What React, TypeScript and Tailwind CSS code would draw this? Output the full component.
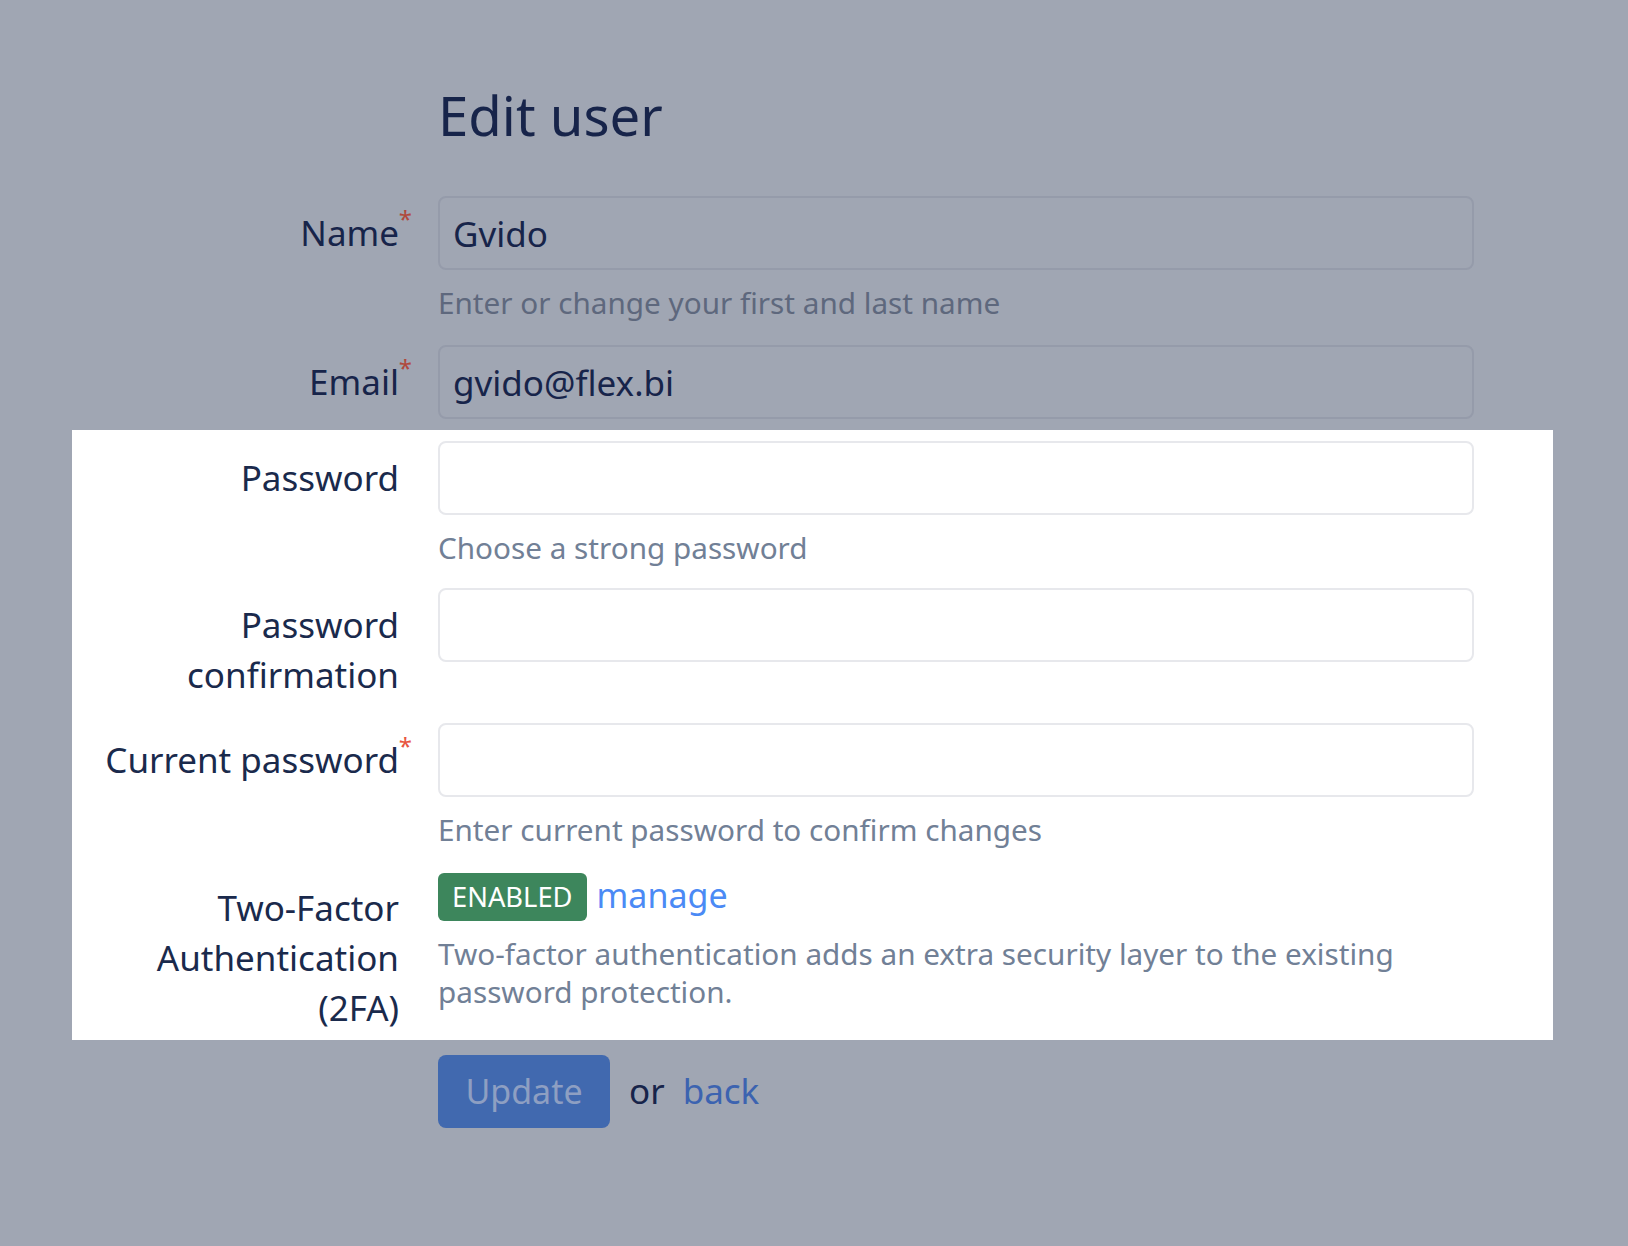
import React from 'react';

// dimmed page colours (overlay over the page) vs. the highlighted white area
const Req = ({ dim }: { dim?: boolean }) => (
    <span className={`absolute -right-[13px] top-[-1px] text-[24px] leading-none ${dim ? 'text-[#b0493d]' : 'text-[#e8553f]'}`}>*</span>
);

function Label({ text, required, dim, lines }: { text: string; required?: boolean; dim?: boolean; lines?: string[] }) {
    return (
        <div className={`w-[327px] shrink-0 text-right pt-[12px] text-[35px] leading-[50px] ${dim ? 'text-[#17244a]' : 'text-[#1a2a4c]'}`}>
            {lines ? (
                lines.map((l, i) => (
                    <div key={i}>{l}</div>
                ))
            ) : (
                <span className="relative inline-block">
                    {text}
                    {required && <Req dim={dim} />}
                </span>
            )}
        </div>
    );
}

function Input({ value, dim, type = 'text' }: { value?: string; dim?: boolean; type?: string }) {
    return (
        <input
            type={type}
            defaultValue={value}
            readOnly
            className={`w-[1036px] h-[74px] rounded-[8px] border-2 px-[13px] text-[35px] outline-none ${dim ? 'bg-[#a0a6b3] border-[#959baa] text-[#17244a]' : 'bg-white border-[#e7e8ec] text-[#1a2a4c]'}`}
            style={{ fontFamily: 'inherit' }}
        />
    );
}

function Help({ children, dim }: { children: React.ReactNode; dim?: boolean }) {
    return <p className={`mt-[14px] text-[29.7px] leading-[38px] ${dim ? 'text-[#5e687d]' : 'text-[#718096]'}`}>{children}</p>;
}

export default function App() {
    return (
        <div className="min-h-screen w-full bg-[#a0a6b3] pt-[80px] pb-[110px]" style={{ fontFamily: '"Noto Sans", "Open Sans", sans-serif' }}>
            <div className="ml-[72px] w-[1481px]">
                <div className="flex gap-[39px]">
                    <div className="w-[327px] shrink-0" />
                    <h1 className="text-[54.5px] leading-[70px] text-[#17244a]">Edit user</h1>
                </div>

                <div className="mt-[46px] flex gap-[39px]">
                    <Label text="Name" required dim />
                    <div>
                        <Input value="Gvido" dim />
                        <Help dim>Enter or change your first and last name</Help>
                    </div>
                </div>

                <div className="mt-[23px] flex gap-[39px]">
                    <Label text="Email" required dim />
                    <Input value="gvido@flex.bi" dim />
                </div>

                {/* highlighted block */}
                <div className="mt-[11px] bg-white pt-[11px] pb-[7px]">
                    <div className="flex gap-[39px]">
                        <Label text="Password" />
                        <div>
                            <Input type="password" />
                            <Help>Choose a strong password</Help>
                        </div>
                    </div>

                    <div className="mt-[21px] flex gap-[39px]">
                        <Label text="" lines={['Password', 'confirmation']} />
                        <div>
                            <Input type="password" />
                        </div>
                    </div>

                    <div className="mt-[23px] flex gap-[39px]">
                        <Label text="Current password" required />
                        <div>
                            <Input type="password" />
                            <Help>Enter current password to confirm changes</Help>
                        </div>
                    </div>

                    <div className="mt-[22px] flex gap-[39px]">
                        <Label text="" lines={['Two-Factor', 'Authentication', '(2FA)']} />
                        <div className="w-[1036px] pt-[2px]">
                            <div className="flex items-center gap-[10px]">
                                <span className="inline-flex h-[48px] items-center rounded-[6px] bg-[#3d865c] px-[14px] text-[27.3px] text-white">ENABLED</span>
                                <a href="#" className="text-[34px] leading-[48px] text-[#4b8af5] -mt-[4px]">manage</a>
                            </div>
                            <Help>Two-factor authentication adds an extra security layer to the existing password protection.</Help>
                        </div>
                    </div>
                </div>

                <div className="mt-[15px] flex gap-[39px]">
                    <div className="w-[327px] shrink-0" />
                    <div className="flex items-center">
                        <button className="h-[73px] w-[172px] rounded-[8px] bg-[#4169af] text-[34px] text-[#8e9fc2]" style={{ fontFamily: 'inherit' }}>
                            Update
                        </button>
                        <span className="ml-[19px] text-[35px] text-[#17244a]">or</span>
                        <a href="#" className="ml-[18px] text-[35px] text-[#3c63b0]">back</a>
                    </div>
                </div>
            </div>
        </div>
    );
}
